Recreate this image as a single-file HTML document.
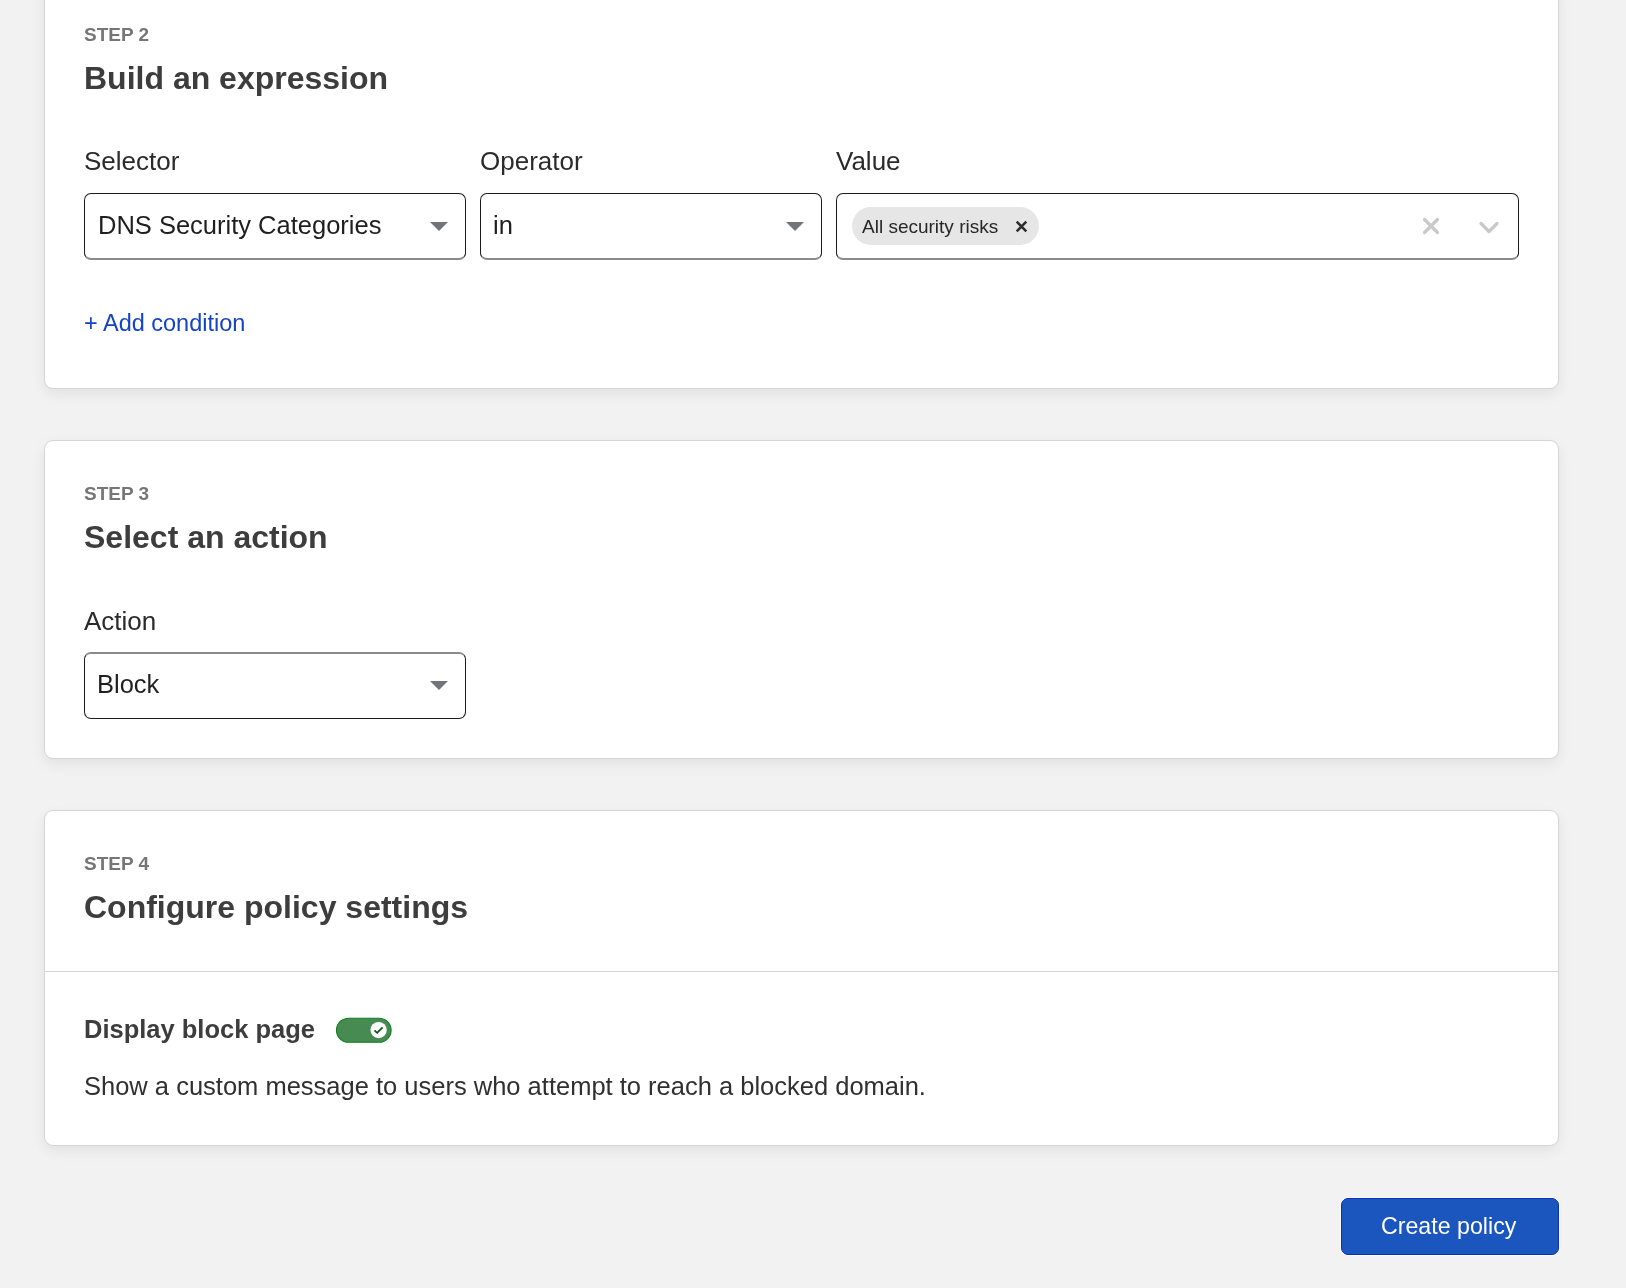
<!DOCTYPE html>
<html><head><meta charset="utf-8"><style>
html,body{margin:0;padding:0;}
body{width:1626px;height:1288px;overflow:hidden;background:#f2f2f2;position:relative;font-family:"Liberation Sans",sans-serif;}
.t{position:absolute;white-space:nowrap;will-change:transform;}
.card{position:absolute;left:44px;width:1515px;box-sizing:border-box;background:#fff;border:1px solid #d5d5d5;border-radius:9px;box-shadow:0 5px 14px rgba(0,0,0,0.07);}
.sel{position:absolute;box-sizing:border-box;border:1px solid #1c1c1c;border-radius:7px;background:#fff;}
.tri{position:absolute;width:0;height:0;border-left:9px solid transparent;border-right:9px solid transparent;border-top:9.5px solid #71757a;}
.btn{position:absolute;left:1341px;top:1198px;width:218px;height:57px;box-sizing:border-box;background:#1b55be;border:1px solid #0a2fc0;border-radius:7px;box-shadow:0 0 0 1px rgba(255,255,255,0.7);}
</style></head><body>
<div class="card" style="top:-20px;height:409px"></div>
<div class="card" style="top:440px;height:319px"></div>
<div class="card" style="top:810px;height:336px"></div>
<div style="position:absolute;left:45px;top:971px;width:1513px;height:1px;background:#d5d5d5"></div>
<div class="t" style="left:84px;top:25px;font-size:19px;line-height:19px;font-weight:700;color:#767676;">STEP 2</div>
<div class="t" style="left:84px;top:62px;font-size:32px;line-height:32px;font-weight:700;color:#3d3d3d;">Build an expression</div>
<div class="t" style="left:84px;top:148px;font-size:26px;line-height:26px;font-weight:400;color:#2b2b2b;">Selector</div>
<div class="t" style="left:480px;top:148px;font-size:26px;line-height:26px;font-weight:400;color:#2b2b2b;">Operator</div>
<div class="t" style="left:836px;top:148px;font-size:26px;line-height:26px;font-weight:400;color:#2b2b2b;">Value</div>
<div class="sel" style="left:84px;top:193px;width:382px;height:67px;border-bottom:2px solid #8a8a8a"></div>
<div class="sel" style="left:480px;top:193px;width:342px;height:67px;border-bottom:2px solid #8a8a8a"></div>
<div class="sel" style="left:836px;top:193px;width:683px;height:67px;border-bottom:2px solid #8a8a8a"></div>
<div class="t" style="left:97.6px;top:213px;font-size:25.5px;line-height:25.5px;font-weight:400;color:#1f1f1f;">DNS Security Categories</div>
<div class="t" style="left:493px;top:213px;font-size:25.5px;line-height:25.5px;font-weight:400;color:#1f1f1f;">in</div>
<div class="tri" style="left:430px;top:222px"></div>
<div class="tri" style="left:786px;top:222px"></div>
<div style="position:absolute;left:852px;top:207px;width:187px;height:38px;border-radius:19px;background:#e6e6e6"></div>
<div class="t" style="left:862px;top:217px;font-size:19px;line-height:19px;font-weight:400;color:#262626;">All security risks</div>
<svg style="position:absolute;left:1014px;top:219px" width="15" height="15" viewBox="0 0 15 15"><path d="M2.7 2.7L12.3 12.3M12.3 2.7L2.7 12.3" stroke="#2e2e2e" stroke-width="2.6" stroke-linecap="butt"/></svg>
<svg style="position:absolute;left:1420px;top:215px" width="22" height="22" viewBox="0 0 22 22"><path d="M4.5 4.5L17.5 17.5M17.5 4.5L4.5 17.5" stroke="#c9c9c9" stroke-width="3.2" stroke-linecap="round"/></svg>
<svg style="position:absolute;left:1476px;top:217px" width="26" height="20" viewBox="0 0 26 20"><path d="M5 6.5L13 14.5L21 6.5" fill="none" stroke="#c9c9c9" stroke-width="3.2" stroke-linecap="round" stroke-linejoin="round"/></svg>
<div class="t" style="left:84px;top:312px;font-size:23.5px;line-height:23.5px;font-weight:400;color:#1544c2;">+ Add condition</div>
<div class="t" style="left:84px;top:484px;font-size:19px;line-height:19px;font-weight:700;color:#767676;">STEP 3</div>
<div class="t" style="left:84px;top:521px;font-size:32px;line-height:32px;font-weight:700;color:#3d3d3d;">Select an action</div>
<div class="t" style="left:84px;top:608px;font-size:26px;line-height:26px;font-weight:400;color:#2b2b2b;">Action</div>
<div class="sel" style="left:84px;top:652px;width:382px;height:67px;border-top:2px solid #8a8a8a"></div>
<div class="t" style="left:97.4px;top:672px;font-size:25.5px;line-height:25.5px;font-weight:400;color:#1f1f1f;">Block</div>
<div class="tri" style="left:430px;top:681px"></div>
<div class="t" style="left:84px;top:854px;font-size:19px;line-height:19px;font-weight:700;color:#767676;">STEP 4</div>
<div class="t" style="left:84px;top:891px;font-size:32px;line-height:32px;font-weight:700;color:#3d3d3d;">Configure policy settings</div>
<div class="t" style="left:84px;top:1017px;font-size:25.5px;line-height:25.5px;font-weight:700;color:#3d3d3d;">Display block page</div>
<svg style="position:absolute;left:330px;top:1010px" width="70" height="40" viewBox="0 0 70 40"><rect x="6.5" y="8.2" width="54.6" height="24.1" rx="12.05" fill="#478a52" stroke="#0b801f" stroke-width="1.1"/><circle cx="48.6" cy="20.1" r="8.15" fill="#fff"/><path d="M44.5 20.4L47.1 22.8L52.6 17.4" fill="none" stroke="#0a5514" stroke-width="1.75"/></svg>
<div class="t" style="left:84px;top:1074px;font-size:25.5px;line-height:25.5px;font-weight:400;color:#303030;">Show a custom message to users who attempt to reach a blocked domain.</div>
<div class="btn"></div>
<div class="t" style="left:1381px;top:1215px;font-size:23.2px;line-height:23.2px;font-weight:400;color:#ffffff;">Create policy</div>
</body></html>
